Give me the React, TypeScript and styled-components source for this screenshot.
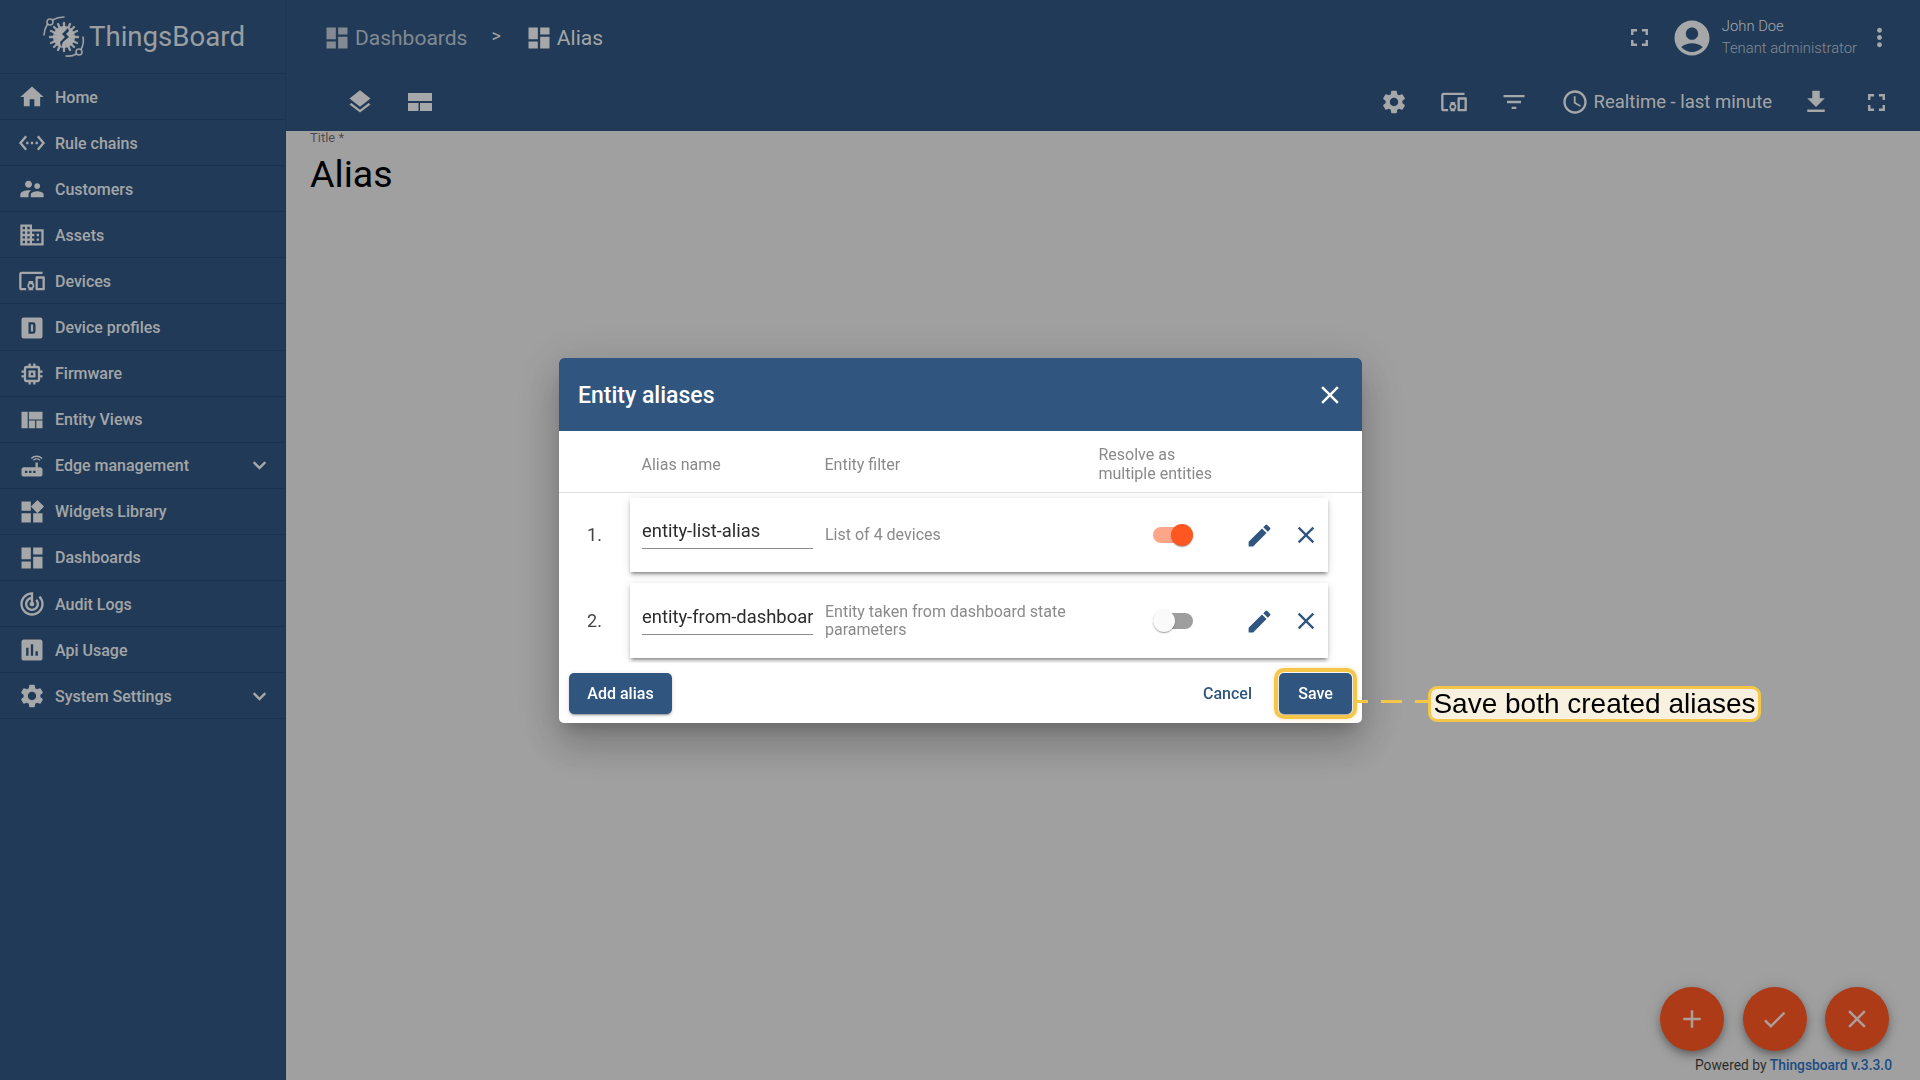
import React from "react";
import styled, { createGlobalStyle } from "styled-components";
import { FaChevronDown } from "react-icons/fa";
import {
  MdAccessTime,
  MdAccountCircle,
  MdAdd,
  MdCheck,
  MdClose,
  MdDashboard,
  MdDevicesOther,
  MdDomain,
  MdEdit,
  MdFileDownload,
  MdFilterList,
  MdFullscreen,
  MdHome,
  MdInsertChart,
  MdLayers,
  MdMemory,
  MdMoreVert,
  MdRouter,
  MdSettings,
  MdSettingsEthernet,
  MdSupervisorAccount,
  MdTrackChanges,
  MdViewQuilt,
  MdWidgets,
} from "react-icons/md";

const GlobalStyle = createGlobalStyle`
  html, body {
    margin: 0;
    height: 100%;
    overflow: hidden;
    font-family: Roboto, "Helvetica Neue", sans-serif;
  }
  * {
    box-sizing: border-box;
  }
`;

const Page = styled.div`
  display: flex;
  width: 1920px;
  height: 1080px;
  background: #ececec;
`;

const Sidebar = styled.nav`
  width: 286px;
  flex: none;
  background: #305680;
  border-right: 1px solid rgba(0, 0, 0, 0.08);
`;

const LogoRow = styled.div`
  display: flex;
  align-items: center;
  height: 74px;
  padding-left: 42px;
  border-bottom: 1px solid rgba(0, 0, 0, 0.12);
  color: rgba(255, 255, 255, 0.88);
  font-size: 27.6px;
  svg {
    margin-right: 1px;
  }
`;

const MenuRow = styled.div`
  display: flex;
  align-items: center;
  height: 46.1px;
  padding: 1px 0 0 18px;
  border-bottom: 1px solid rgba(0, 0, 0, 0.12);
  color: rgba(255, 255, 255, 0.95);
  font-size: 16px;
  font-weight: 500;
  .label {
    margin-left: 9px;
    flex: 1;
  }
  .chevron {
    margin-right: 18px;
  }
`;

const Main = styled.main`
  flex: 1;
  min-width: 0;
  display: flex;
  flex-direction: column;
`;

const Toolbar = styled.header`
  height: 131px;
  flex: none;
  background: #305680;
  color: rgba(255, 255, 255, 0.95);
`;

const TopBar = styled.div`
  display: flex;
  align-items: center;
  height: 75px;
  padding-left: 37px;
`;

const Crumb = styled.div<{ $active?: boolean }>`
  display: flex;
  align-items: center;
  gap: 4px;
  font-size: 21px;
  color: rgba(255, 255, 255, ${(p) => (p.$active ? 0.95 : 0.7)});
`;

const CrumbSep = styled.span`
  margin: 0 24px 0 24px;
  font-size: 18px;
  position: relative;
  top: -2px;
`;

const UserArea = styled.div`
  margin-left: auto;
  display: flex;
  align-items: center;
  padding-right: 26px;
  .expand {
    margin-right: 17px;
  }
`;

const UserText = styled.div`
  margin: 0 8px 2px 9px;
  font-size: 14.8px;
  font-weight: 300;
  line-height: 22px;
  .role {
    color: rgba(255, 255, 255, 0.7);
  }
`;

const ActionBar = styled.div`
  display: flex;
  align-items: center;
  height: 54px;
  padding: 0 14px 0 44px;
`;

const IconSlot = styled.span`
  width: 60px;
  height: 48px;
  display: flex;
  align-items: center;
  justify-content: center;
`;

const Spacer = styled.div`
  flex: 1;
`;

const TimeWindow = styled.div`
  display: flex;
  align-items: center;
  gap: 5px;
  margin-left: 17px;
  padding-right: 14px;
  font-size: 18.5px;
`;

const Content = styled.section`
  position: relative;
  flex: 1;
  padding-left: 24px;
`;

const TitleLabel = styled.div`
  font-size: 13px;
  line-height: 14px;
  color: rgba(0, 0, 0, 0.54);
`;

const TitleValue = styled.div`
  font-size: 37.6px;
  line-height: 46px;
  margin-top: 6px;
  color: #000;
`;

const Fabs = styled.div`
  position: absolute;
  right: 31px;
  bottom: -1px;
  display: flex;
  gap: 18.5px;
`;

const Fab = styled.div`
  width: 64px;
  height: 64px;
  border-radius: 50%;
  background: #ff5722;
  color: rgba(255, 255, 255, 0.87);
  display: flex;
  align-items: center;
  justify-content: center;
  box-shadow: 0 3px 6px -1px rgba(0, 0, 0, 0.25), 0 6px 10px 0 rgba(0, 0, 0, 0.14),
    0 1px 18px 0 rgba(0, 0, 0, 0.12);
`;

const Footer = styled.footer`
  flex: none;
  height: 30px;
  padding: 0 28px 0 0;
  text-align: right;
  font-size: 13.8px;
  line-height: 30px;
  color: rgba(0, 0, 0, 0.75);
  b {
    font-weight: 500;
    color: #2d72c4;
  }
`;

const Backdrop = styled.div`
  position: fixed;
  inset: 0;
  background: rgba(0, 0, 0, 0.32);
  display: flex;
  align-items: center;
  justify-content: center;
`;

const Dialog = styled.div`
  width: 803px;
  margin: 1px 0 0 1px;
  background: #fff;
  border-radius: 5px;
  box-shadow: 0 11px 15px -7px rgba(0, 0, 0, 0.2), 0 24px 38px 3px rgba(0, 0, 0, 0.14),
    0 9px 46px 8px rgba(0, 0, 0, 0.12);
`;

const DialogHeader = styled.div`
  display: flex;
  align-items: center;
  justify-content: space-between;
  height: 73px;
  padding: 1px 17px 0 19px;
  background: #305680;
  border-radius: 5px 5px 0 0;
  color: #fff;
  font-size: 23px;
  font-weight: 500;
`;

const TableHead = styled.div`
  display: flex;
  align-items: center;
  height: 62px;
  padding: 5px 0 0 82.5px;
  border-bottom: 1px solid #dedede;
  color: #8a8a8a;
  font-size: 16px;
  line-height: 19px;
  .name {
    width: 183px;
    padding-top: 1px;
  }
  .filter {
    width: 274px;
    padding-top: 1px;
  }
`;

const Rows = styled.div`
  height: 170px;
  padding-top: 5px;
  overflow: hidden;
  display: flex;
  flex-direction: column;
  gap: 11px;
`;

const RowIndex = styled.div`
  width: 71px;
  padding-left: 28px;
  font-size: 18px;
  line-height: 20px;
  color: #444;
`;

const Card = styled.div`
  width: 698px;
  height: 74px;
  display: flex;
  align-items: center;
  padding-left: 12px;
  background: #fff;
  box-shadow: 0 3px 3px -2px rgba(0, 0, 0, 0.35), 0 3px 4px 0 rgba(0, 0, 0, 0.2),
    0 1px 10px 0 rgba(0, 0, 0, 0.1);
`;

const AliasRow = styled.div`
  display: flex;
  align-items: center;
  &:last-child ${Card} {
    height: 75px;
    padding-top: 1px;
  }
`;

const NameInput = styled.input`
  width: 171px;
  height: 28px;
  padding: 0 0 8px;
  margin: 0 12px 0 0;
  border: 0;
  border-bottom: 1px solid #8c8c8c;
  outline: none;
  background: none;
  font-family: inherit;
  font-size: 18.4px;
  line-height: 19px;
  color: #2b2b2b;
`;

const FilterText = styled.div`
  width: 250px;
  color: #8a8a8a;
  font-size: 16px;
  line-height: 18px;
`;

const Toggle = styled.div<{ $on?: boolean }>`
  position: relative;
  width: 41px;
  height: 16px;
  margin-left: 79px;
  margin-right: 43px;
  border-radius: 8px;
  background: ${(p) => (p.$on ? "#ffa68a" : "#9e9e9e")};
  &::after {
    content: "";
    position: absolute;
    top: -3px;
    ${(p) => (p.$on ? "right: 0;" : "left: 0;")}
    width: 22px;
    height: 22px;
    border-radius: 50%;
    background: ${(p) => (p.$on ? "#ff5722" : "#fafafa")};
    box-shadow: 0 2px 1px -1px rgba(0, 0, 0, 0.2), 0 1px 1px 0 rgba(0, 0, 0, 0.14),
      0 1px 3px 0 rgba(0, 0, 0, 0.12);
  }
`;

const RowAction = styled.span`
  width: 46px;
  display: flex;
  align-items: center;
  justify-content: center;
  color: #305680;
  & + & {
    padding-left: 1px;
  }
`;

const DialogFooter = styled.div`
  display: flex;
  align-items: flex-start;
  height: 60px;
  padding: 10px 10px 0;
`;

const Button = styled.button<{ $flat?: boolean }>`
  height: 41px;
  border: 0;
  border-radius: 5px;
  font-family: inherit;
  font-size: 16px;
  font-weight: 500;
  color: ${(p) => (p.$flat ? "#305680" : "#fff")};
  background: ${(p) => (p.$flat ? "transparent" : "#305680")};
  box-shadow: ${(p) =>
    p.$flat
      ? "none"
      : "0 3px 1px -2px rgba(0,0,0,.2), 0 2px 2px 0 rgba(0,0,0,.14), 0 1px 5px 0 rgba(0,0,0,.12)"};
  padding: 0;
`;

const AddButton = styled(Button)`
  width: 103px;
  margin-right: auto;
`;

const CancelButton = styled(Button)`
  width: 48px;
  margin-right: 28px;
`;

const SaveWrap = styled.div`
  position: relative;
  width: 73px;
  height: 41px;
`;

const SaveButton = styled(Button)`
  width: 100%;
`;

const Highlight = styled.div`
  position: absolute;
  inset: -5px;
  border: 4px solid #f5c64a;
  border-radius: 10px;
  box-shadow: 0 0 4px rgba(245, 198, 74, 0.4);
`;

const Leader = styled.div`
  position: absolute;
  left: 78px;
  top: 27px;
  width: 71px;
  height: 3px;
  background: linear-gradient(to right, #f5c64a 21px, transparent 21px) -10px 0 / 34px 3px repeat-x;
`;

const Callout = styled.div`
  position: absolute;
  left: 149px;
  top: 13px;
  height: 36px;
  width: 333px;
  display: flex;
  align-items: center;
  justify-content: center;
  border: 3px solid #f5c64a;
  border-radius: 9px;
  background: #f9f1e0;
  color: #000;
  font-family: "Liberation Sans", Arial, sans-serif;
  font-size: 28px;
  white-space: nowrap;
`;

const ThingsboardLogo = () => (
  <svg width="46" height="46" viewBox="0 0 46 46" fill="none">
    <g stroke="currentColor" strokeWidth="1.6" strokeLinecap="round">
      <circle cx="8" cy="8" r="3" />
      <path d="M2 21C2 17 3 14 5.5 10M10.5 6C14 4 18 3 22 3" />
      <circle cx="37" cy="38" r="3" />
      <path d="M41 23C42 28 41 32 39 35.5M34.5 40C31 42 28 42.5 24 42" />
    </g>
    <g stroke="currentColor" strokeWidth="2.4" strokeLinecap="round">
      <path d="M22 9v28M8 23h28M12 13l20 20M32 13L12 33M16 10l12 26M28 10L16 36M9 17l26 12M35 17L9 29" />
    </g>
    <circle cx="22" cy="23" r="11" fill="currentColor" />
    <path d="M26 14l-6 6 3 3-5 5 1 5 2-5 6-5-3-3 3-3z" fill="#305680" />
  </svg>
);

const DeviceProfileIcon = () => (
  <svg width="28" height="28" viewBox="0 0 24 24" fill="currentColor">
    <path
      fillRule="evenodd"
      d="M5 3h14a2 2 0 0 1 2 2v14a2 2 0 0 1-2 2H5a2 2 0 0 1-2-2V5a2 2 0 0 1 2-2zm4 4v10h4a2 2 0 0 0 2-2V9a2 2 0 0 0-2-2H9zm2 2h2v6h-2V9z"
    />
  </svg>
);

const CompactIcon = () => (
  <svg width="24" height="18" viewBox="0 0 24 18" fill="currentColor">
    <path d="M0 0h24v8H0zM0 10h10.5v8H0zM12 10h12v8H12z" />
  </svg>
);

const menu: { label: string; icon: React.ReactNode; more?: boolean }[] = [
  { label: "Home", icon: <MdHome size={28} /> },
  { label: "Rule chains", icon: <MdSettingsEthernet size={28} /> },
  { label: "Customers", icon: <MdSupervisorAccount size={28} /> },
  { label: "Assets", icon: <MdDomain size={28} /> },
  { label: "Devices", icon: <MdDevicesOther size={28} /> },
  { label: "Device profiles", icon: <DeviceProfileIcon /> },
  { label: "Firmware", icon: <MdMemory size={28} /> },
  { label: "Entity Views", icon: <MdViewQuilt size={28} /> },
  { label: "Edge management", icon: <MdRouter size={28} />, more: true },
  { label: "Widgets Library", icon: <MdWidgets size={28} /> },
  { label: "Dashboards", icon: <MdDashboard size={28} /> },
  { label: "Audit Logs", icon: <MdTrackChanges size={28} /> },
  { label: "Api Usage", icon: <MdInsertChart size={28} /> },
  { label: "System Settings", icon: <MdSettings size={28} />, more: true },
];

const aliases = [
  { name: "entity-list-alias", filter: "List of 4 devices", resolve: true },
  {
    name: "entity-from-dashboard",
    filter: "Entity taken from dashboard state parameters",
    resolve: false,
  },
];

export default function App() {
  return (
    <>
      <GlobalStyle />
      <Page>
        <Sidebar>
          <LogoRow>
            <ThingsboardLogo />
            ThingsBoard
          </LogoRow>
          {menu.map((item) => (
            <MenuRow key={item.label}>
              {item.icon}
              <span className="label">{item.label}</span>
              {item.more && <FaChevronDown className="chevron" size={15} />}
            </MenuRow>
          ))}
        </Sidebar>
        <Main>
          <Toolbar>
            <TopBar>
              <Crumb>
                <MdDashboard size={28} />
                Dashboards
              </Crumb>
              <CrumbSep>&gt;</CrumbSep>
              <Crumb $active>
                <MdDashboard size={28} />
                Alias
              </Crumb>
              <UserArea>
                <MdFullscreen className="expand" size={29} />
                <MdAccountCircle size={42} />
                <UserText>
                  <div>John Doe</div>
                  <div className="role">Tenant administrator</div>
                </UserText>
                <MdMoreVert size={29} />
              </UserArea>
            </TopBar>
            <ActionBar>
              <IconSlot>
                <MdLayers size={28} />
              </IconSlot>
              <IconSlot>
                <CompactIcon />
              </IconSlot>
              <Spacer />
              <IconSlot>
                <MdSettings size={28} />
              </IconSlot>
              <IconSlot>
                <MdDevicesOther size={28} />
              </IconSlot>
              <IconSlot>
                <MdFilterList size={28} />
              </IconSlot>
              <TimeWindow>
                <MdAccessTime size={28} />
                Realtime - last minute
              </TimeWindow>
              <IconSlot>
                <MdFileDownload size={30} />
              </IconSlot>
              <IconSlot>
                <MdFullscreen size={29} />
              </IconSlot>
            </ActionBar>
          </Toolbar>
          <Content>
            <TitleLabel>Title *</TitleLabel>
            <TitleValue>Alias</TitleValue>
            <Fabs>
              <Fab>
                <MdAdd size={30} />
              </Fab>
              <Fab>
                <MdCheck size={29} />
              </Fab>
              <Fab>
                <MdClose size={30} />
              </Fab>
            </Fabs>
          </Content>
          <Footer>
            Powered by <b>Thingsboard v.3.3.0</b>
          </Footer>
        </Main>
      </Page>
      <Backdrop>
        <Dialog>
          <DialogHeader>
            Entity aliases
            <MdClose size={30} />
          </DialogHeader>
          <TableHead>
            <div className="name">Alias name</div>
            <div className="filter">Entity filter</div>
            <div>
              Resolve as
              <br />
              multiple entities
            </div>
          </TableHead>
          <Rows>
            {aliases.map((alias, i) => (
              <AliasRow key={alias.name}>
                <RowIndex>{i + 1}.</RowIndex>
                <Card>
                  <NameInput value={alias.name} readOnly />
                  <FilterText>{alias.filter}</FilterText>
                  <Toggle $on={alias.resolve} />
                  <RowAction>
                    <MdEdit size={29} />
                  </RowAction>
                  <RowAction>
                    <MdClose size={28} />
                  </RowAction>
                </Card>
              </AliasRow>
            ))}
          </Rows>
          <DialogFooter>
            <AddButton>Add alias</AddButton>
            <CancelButton $flat>Cancel</CancelButton>
            <SaveWrap>
              <SaveButton>Save</SaveButton>
              <Highlight />
              <Leader />
              <Callout>Save both created aliases</Callout>
            </SaveWrap>
          </DialogFooter>
        </Dialog>
      </Backdrop>
    </>
  );
}
